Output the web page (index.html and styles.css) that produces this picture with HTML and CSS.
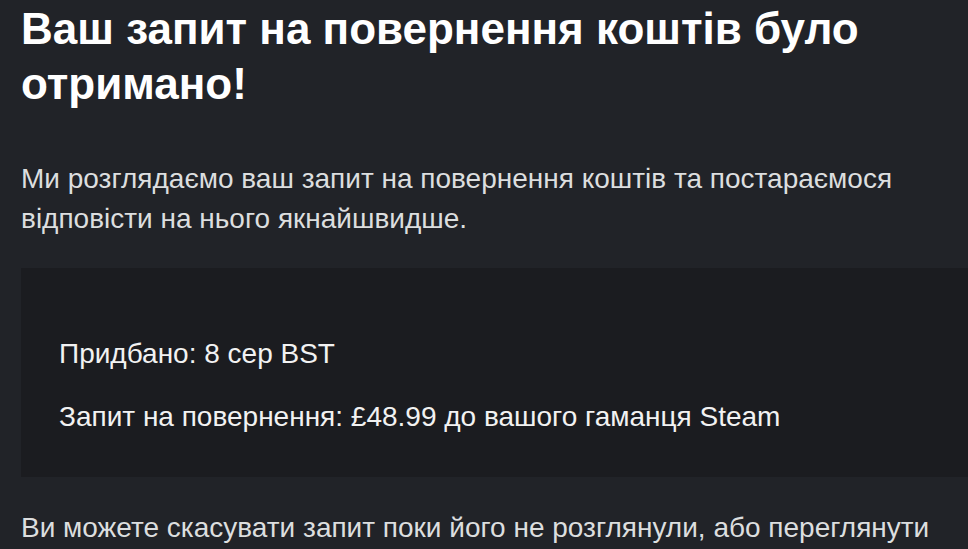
FILE: index.html
```html
<!DOCTYPE html>
<html lang="uk">
  <head>
    <meta charset="UTF-8" />
    <title>Запит на повернення коштів</title>
    <link rel="stylesheet" href="styles.css">
  </head>
  <body>
    <div class="page">
      <h1>Ваш запит на повернення коштів було отримано!</h1>

      <p class="lead">
        Ми розглядаємо ваш запит на повернення коштів та постараємося
        відповісти на нього якнайшвидше.
      </p>

      <div class="summary">
        <p>Придбано: 8 сер BST</p>
        <p>Запит на повернення: £48.99 до вашого гаманця Steam</p>
      </div>

      <p class="lead">
        Ви можете скасувати запит поки його не розглянули, або переглянути
        статус запиту на сторінці підтримки.
      </p>
    </div>
  </body>
</html>
```

FILE: styles.css
```css
* {
  margin: 0;
  padding: 0;
  box-sizing: border-box;
}

html,
body {
  overflow: hidden;
}

body {
  background: #212328;
  font-family: "Liberation Sans", Arial, sans-serif;
  color: #dcdedf;
}

.page {
  width: 960px;
  margin-left: 21px;
  padding-top: 1px;
}

h1 {
  font-size: 44px;
  line-height: 55px;
  font-weight: bold;
  color: #ffffff;
  margin-bottom: 48px;
}

.lead {
  font-size: 28px;
  line-height: 40px;
  color: #dcdedf;
}

.summary {
  background: #1b1c20;
  margin: 29px 0 31px;
  padding: 66px 38px 40px;
}

.summary p {
  font-size: 28px;
  line-height: 40px;
  color: #f2f2f2;
}

.summary p + p {
  margin-top: 23px;
}
```
